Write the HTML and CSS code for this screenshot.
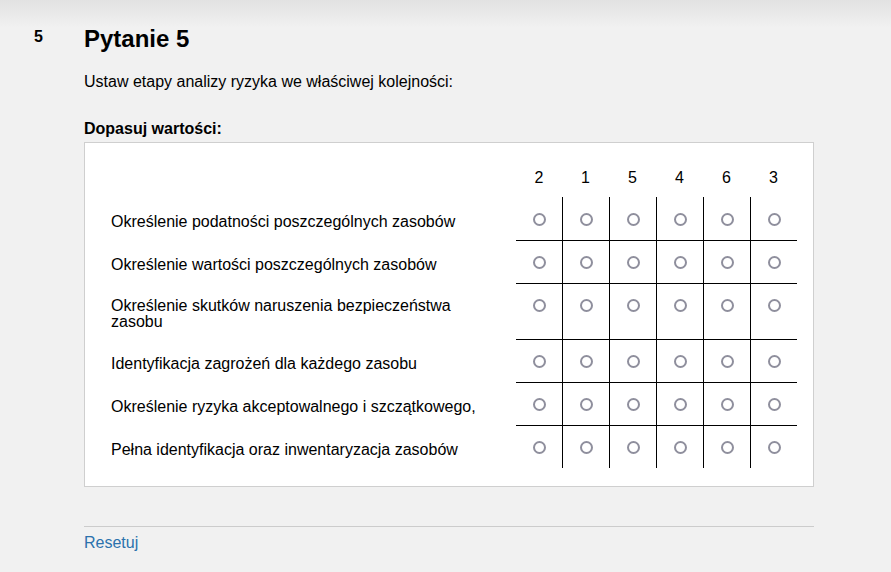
FILE: index.html
```html
<!DOCTYPE html>
<html lang="pl">
<head>
<meta charset="utf-8">
<title>Pytanie 5</title>
<link rel="stylesheet" href="styles.css">
</head>
<body>
<div class="question">
  <div class="qno">5</div>
  <div class="qbody">
    <h2 class="qtitle">Pytanie 5</h2>
    <p class="qtext">Ustaw etapy analizy ryzyka we właściwej kolejności:</p>
    <div class="answer-label">Dopasuj wartości:</div>
    <div class="panel">
      <table class="grid">
        <colgroup>
          <col class="c-label">
          <col class="c-first">
          <col class="c-opt"><col class="c-opt"><col class="c-opt"><col class="c-opt"><col class="c-opt">
        </colgroup>
        <thead>
          <tr>
            <th></th>
            <th>2</th><th>1</th><th>5</th><th>4</th><th>6</th><th>3</th>
          </tr>
        </thead>
        <tbody>
          <tr>
            <td class="label">Określenie podatności poszczególnych zasobów</td>
            <td class="opt"><input type="radio" name="r1"></td><td class="opt"><input type="radio" name="r1"></td><td class="opt"><input type="radio" name="r1"></td><td class="opt"><input type="radio" name="r1"></td><td class="opt"><input type="radio" name="r1"></td><td class="opt"><input type="radio" name="r1"></td>
          </tr>
          <tr>
            <td class="label">Określenie wartości poszczególnych zasobów</td>
            <td class="opt"><input type="radio" name="r2"></td><td class="opt"><input type="radio" name="r2"></td><td class="opt"><input type="radio" name="r2"></td><td class="opt"><input type="radio" name="r2"></td><td class="opt"><input type="radio" name="r2"></td><td class="opt"><input type="radio" name="r2"></td>
          </tr>
          <tr>
            <td class="label">Określenie skutków naruszenia bezpieczeństwa zasobu</td>
            <td class="opt"><input type="radio" name="r3"></td><td class="opt"><input type="radio" name="r3"></td><td class="opt"><input type="radio" name="r3"></td><td class="opt"><input type="radio" name="r3"></td><td class="opt"><input type="radio" name="r3"></td><td class="opt"><input type="radio" name="r3"></td>
          </tr>
          <tr>
            <td class="label">Identyfikacja zagrożeń dla każdego zasobu</td>
            <td class="opt"><input type="radio" name="r4"></td><td class="opt"><input type="radio" name="r4"></td><td class="opt"><input type="radio" name="r4"></td><td class="opt"><input type="radio" name="r4"></td><td class="opt"><input type="radio" name="r4"></td><td class="opt"><input type="radio" name="r4"></td>
          </tr>
          <tr>
            <td class="label">Określenie ryzyka akceptowalnego i szczątkowego,</td>
            <td class="opt"><input type="radio" name="r5"></td><td class="opt"><input type="radio" name="r5"></td><td class="opt"><input type="radio" name="r5"></td><td class="opt"><input type="radio" name="r5"></td><td class="opt"><input type="radio" name="r5"></td><td class="opt"><input type="radio" name="r5"></td>
          </tr>
          <tr>
            <td class="label">Pełna identyfikacja oraz inwentaryzacja zasobów</td>
            <td class="opt"><input type="radio" name="r6"></td><td class="opt"><input type="radio" name="r6"></td><td class="opt"><input type="radio" name="r6"></td><td class="opt"><input type="radio" name="r6"></td><td class="opt"><input type="radio" name="r6"></td><td class="opt"><input type="radio" name="r6"></td>
          </tr>
        </tbody>
      </table>
    </div>
    <div class="footer"><a class="reset" href="#">Resetuj</a></div>
  </div>
</div>
</body>
</html>
```
FILE: styles.css
```css
html, body {
  margin: 0;
  padding: 0;
}
body {
  background: linear-gradient(to bottom, #e2e2e2 0, #f1f1f1 28px) no-repeat, #f1f1f1;
  font-family: "Liberation Sans", Arial, sans-serif;
  color: #000;
  min-height: 572px;
}
.question {
  display: flex;
  padding-top: 25px;
}
.qno {
  flex: none;
  width: 84px;
  padding-left: 34px;
  box-sizing: border-box;
  font-size: 16px;
  font-weight: bold;
  line-height: 18px;
  padding-top: 3px;
}
.qbody {
  flex: none;
  width: 730px;
}
.qtitle {
  margin: 0;
  font-size: 24px;
  line-height: 28px;
  font-weight: bold;
}
.qtext {
  margin: 20px 0 0;
  font-size: 16px;
  line-height: 18px;
}
.answer-label {
  margin-top: 29px;
  font-size: 16px;
  line-height: 18px;
  font-weight: bold;
}
.panel {
  margin-top: 4px;
  background: #fff;
  border: 1px solid #cfcfcf;
  padding: 16px 16px 18px;
}
.grid {
  border-collapse: separate;
  border-spacing: 0;
  table-layout: fixed;
  width: 696px;
  font-size: 16px;
}
.c-label { width: 415px; }
.c-first { width: 46px; }
.c-opt { width: 47px; }
.grid th {
  height: 28px;
  padding: 0 0 10px;
  font-weight: normal;
  text-align: center;
  vertical-align: bottom;
  line-height: 18px;
}
.grid td.label {
  padding: 15px 10px 9px;
  line-height: 16px;
  vertical-align: middle;
}
.grid td.opt {
  padding: 15px 0 14px;
  vertical-align: top;
  text-align: center;
}
.grid tbody tr:first-child td.opt {
  padding-top: 16px;
}
.grid td.opt + td.opt {
  border-left: 1px solid #000;
}
.grid tbody tr + tr td.opt {
  border-top: 1px solid #000;
}
.grid input[type="radio"] {
  -webkit-appearance: none;
  appearance: none;
  display: block;
  box-sizing: border-box;
  width: 13px;
  height: 13px;
  margin: 0 auto;
  border: 2px solid #8f8f9d;
  border-radius: 50%;
  background: #fff;
}
.footer {
  margin-top: 39px;
  border-top: 1px solid #cccccc;
  padding-top: 7px;
  font-size: 16px;
  line-height: 18px;
}
.reset {
  color: #2b72ad;
  text-decoration: none;
}
```
